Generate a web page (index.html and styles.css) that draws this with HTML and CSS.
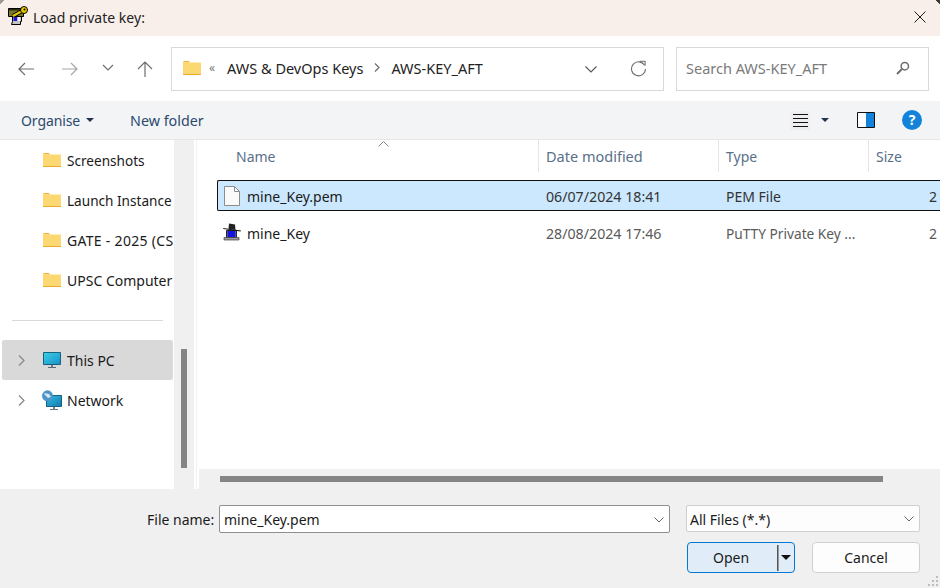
FILE: index.html
```html
<!DOCTYPE html>
<html lang="en">
<head>
<meta charset="utf-8">
<title>Load private key:</title>
<link rel="stylesheet" href="styles.css">
</head>
<body>
<svg class="defs" width="0" height="0" aria-hidden="true">
  <defs>
    <symbol id="folder" viewBox="0 0 18 14">
      <path d="M0 1.5C0 .7.6 0 1.4 0h4.4l1.6 1.5H0z" fill="#f2b233"/>
      <path d="M0 1.5h16.8c.7 0 1.2.5 1.2 1.2v10c0 .7-.5 1.3-1.2 1.3H1.2C.5 14 0 13.4 0 12.7z" fill="#fcd873"/>
      <path d="M0 13h18v.2c0 .5-.5.8-1.2.8H1.2C.5 14 0 13.7 0 13.2z" fill="#e9a825"/>
    </symbol>
  </defs>
</svg>
<div class="dialog">
  <header class="titlebar">
    <svg class="app-icon" width="20" height="20" viewBox="0 0 20 20">
      <path d="M.5 2.500h15v8H.5z" fill="#77772a" stroke="#000"/>
      <path d="M1 3h13v1.500H1z" fill="#2c2c10"/>
      <path d="M4.500 10.500h9v5h-1v3h-9l1-3z" fill="#c4c4c4" stroke="#000"/>
      <path d="M5.500 11h4v4h-4z" fill="#1a1ad8"/>
      <path d="M9.500 11h2.500v4H9.500z" fill="#f4f4f4"/>
      <path d="M5 10l9-5" stroke="#000" stroke-width="4.200"/>
      <path d="M5 10l9-5" stroke="#e8c800" stroke-width="2.200"/>
      <circle cx="16" cy="4" r="3.500" fill="#e8c800" stroke="#000"/>
      <circle cx="16.500" cy="3.500" r="1" fill="#000"/>
    </svg>
    <span class="title">Load private key:</span>
    <svg class="close" width="12" height="12" viewBox="0 0 12 12"><path d="M.5.5l11 11M11.5.5l-11 11" stroke="#1a1a1a" fill="none"/></svg>
  </header>

  <nav class="navbar">
    <svg class="nav-btn nav-back" width="16" height="14" viewBox="0 0 16 14"><path d="M16 7H1M7 1L1 7l6 6" stroke="#6e6e6e" stroke-width="1.2" fill="none"/></svg>
    <svg class="nav-btn nav-fwd" width="16" height="14" viewBox="0 0 16 14"><path d="M0 7h15M9 1l6 6-6 6" stroke="#a6a6a6" stroke-width="1.2" fill="none"/></svg>
    <svg class="nav-btn nav-drop" width="12" height="7" viewBox="0 0 12 7"><path d="M1 1l5 5 5-5" stroke="#6e6e6e" stroke-width="1.2" fill="none"/></svg>
    <svg class="nav-btn nav-up" width="16" height="16" viewBox="0 0 16 16"><path d="M8 16V1M1 8l7-7 7 7" stroke="#6e6e6e" stroke-width="1.2" fill="none"/></svg>
    <div class="address">
      <svg class="addr-folder" width="18" height="14"><use href="#folder"/></svg>
      <span class="crumb-more">«</span>
      <span class="crumb">AWS &amp; DevOps Keys</span>
      <svg class="crumb-sep" width="6" height="9" viewBox="0 0 6 9"><path d="M1 .5l4 4-4 4" stroke="#666" stroke-width="1.1" fill="none"/></svg>
      <span class="crumb">AWS-KEY_AFT</span>
      <svg class="addr-drop" width="12" height="7" viewBox="0 0 12 7"><path d="M.5.5L6 6 11.500.5" stroke="#555" stroke-width="1.1" fill="none"/></svg>
      <svg class="addr-refresh" width="17" height="17" viewBox="0 0 17 17"><path d="M14.5 5.2A7 7 0 1 0 15.5 9" stroke="#707070" stroke-width="1.1" fill="none"/><path d="M10.5 1h5.2v4.6" stroke="#707070" stroke-width="1.1" fill="none" transform="translate(-.6 .2)"/></svg>
    </div>
    <div class="search">
      <span class="search-text">Search AWS-KEY_AFT</span>
      <svg width="14" height="14" viewBox="0 0 14 14"><circle cx="8.8" cy="5.2" r="3.7" stroke="#6e6e6e" stroke-width="1.5" fill="none"/><path d="M6 8l-5 5" stroke="#6e6e6e" stroke-width="2"/></svg>
    </div>
  </nav>

  <div class="toolbar">
    <span class="tool organise">Organise</span>
    <span class="caret"></span>
    <span class="tool newfolder">New folder</span>
    <span class="view-btn">
      <svg width="15" height="13" viewBox="0 0 15 13"><path d="M0 .5h15M0 4.5h15M0 8.500h15M0 12.500h15" stroke="#111"/></svg>
    </span>
    <span class="caret view-caret"></span>
    <svg class="pane" width="18" height="16" viewBox="0 0 18 16"><path d="M.5.500h17v15H.5z" fill="#fff" stroke="#111"/><path d="M9 1h8v14H9z" fill="#1283d8"/></svg>
    <span class="help">?</span>
  </div>

  <main class="panes">
    <aside class="sidebar">
      <div class="side-row"><svg class="side-folder" width="18" height="14"><use href="#folder"/></svg><span class="side-text side-narrow">Screenshots</span></div>
      <div class="side-row"><svg class="side-folder" width="18" height="14"><use href="#folder"/></svg><span class="side-text side-narrow">Launch Instance</span></div>
      <div class="side-row"><svg class="side-folder" width="18" height="14"><use href="#folder"/></svg><span class="side-text side-wide">GATE - 2025 (CS</span></div>
      <div class="side-row"><svg class="side-folder" width="18" height="14"><use href="#folder"/></svg><span class="side-text">UPSC Computer</span></div>
      <div class="side-divider"></div>
      <div class="side-row side-row-active">
        <svg class="chev" width="7" height="11" viewBox="0 0 7 11"><path d="M1 .5l5 5-5 5" stroke="#8a8a8a" stroke-width="1.300" fill="none"/></svg>
        <svg class="side-icon" width="18" height="16" viewBox="0 0 18 16"><defs><linearGradient id="scr" x1="0" y1="0" x2="1" y2="1"><stop offset="0" stop-color="#3cd0e6"/><stop offset="1" stop-color="#1790c8"/></linearGradient></defs><path d="M.5.500h17v12H.5z" fill="url(#scr)" stroke="#17617f"/><path d="M8 13h2v2H8z" fill="#6f7f8a"/><path d="M5 15h8v1H5z" fill="#5b6872"/></svg>
        <span class="side-text">This PC</span>
      </div>
      <div class="side-row">
        <svg class="chev" width="7" height="11" viewBox="0 0 7 11"><path d="M1 .5l5 5-5 5" stroke="#8a8a8a" stroke-width="1.300" fill="none"/></svg>
        <svg class="side-icon net-icon" width="20" height="20" viewBox="0 0 20 20"><defs><linearGradient id="scr2" x1="0" y1="0" x2="1" y2="1"><stop offset="0" stop-color="#2fc0de"/><stop offset="1" stop-color="#1478b0"/></linearGradient></defs><path d="M4.500 5.500h15v11h-15z" fill="url(#scr2)" stroke="#175f80"/><path d="M11 17h2v2h-2z" fill="#6f7f8a"/><path d="M8 19h8v1H8z" fill="#6b7780"/><circle cx="5.500" cy="5.800" r="5.500" fill="#4d94c9"/><path d="M2 3l5 1 2 3-3 1-3-3z" fill="#d5e6f2"/></svg>
        <span class="side-text">Network</span>
      </div>
    </aside>
    <div class="side-scroll"><div class="side-thumb"></div></div>
    <section class="files">
      <div class="file-area">
        <div class="cols">
          <div class="col col-name">Name<svg class="sort" width="11" height="6" viewBox="0 0 11 6"><path d="M.5 5.500l5-5 5 5" stroke="#8a8a8a" fill="none"/></svg></div>
          <div class="col col-date">Date modified</div>
          <div class="col col-type">Type</div>
          <div class="col col-size">Size</div>
        </div>
        <div class="file-row file-row-selected">
          <div class="cell cell-name">
            <svg class="file-icon" width="16" height="20" viewBox="0 0 16 20"><path d="M.5.500h10l5 5v14H.5z" fill="#fafafa" stroke="#8c8c8c"/><path d="M10.500.500v5h5" fill="none" stroke="#8c8c8c"/></svg>
            <span>mine_Key.pem</span>
          </div>
          <div class="cell cell-date">06/07/2024 18:41</div>
          <div class="cell cell-type">PEM File</div>
          <div class="cell cell-size">2</div>
        </div>
        <div class="file-row">
          <div class="cell cell-name">
            <svg class="file-icon putty-icon" width="18" height="18" viewBox="0 0 18 18"><path d="M3.500 7.500h10v7h-10z" fill="#8a8a8a" stroke="#222"/><path d="M4.500 8h8v6h-8z" fill="#1414e0"/><path d="M1 14.500h15v2.500H1z" fill="#9a9a9a" stroke="#444" stroke-width=".7"/><path d="M0 5l18 2.500-.5 1L.5 6z" fill="#111"/><path d="M6 .5l6 1 .5 5.500L5.500 6z" fill="#222"/></svg>
            <span>mine_Key</span>
          </div>
          <div class="cell cell-date">28/08/2024 17:46</div>
          <div class="cell cell-type cell-type-long">PuTTY Private Key ...</div>
          <div class="cell cell-size">2</div>
        </div>
      </div>
      <div class="h-scroll"><div class="h-thumb"></div></div>
    </section>
  </main>

  <footer class="footer">
    <div class="footer-grid">
      <label class="fname-label">File name:</label>
      <div class="field field-name"><span>mine_Key.pem</span><svg width="10" height="6" viewBox="0 0 10 6"><path d="M.5.500L5 5 9.500.5" stroke="#666" fill="none"/></svg></div>
      <div class="field field-type"><span>All Files (*.*)</span><svg width="10" height="6" viewBox="0 0 10 6"><path d="M.5.500L5 5 9.500.5" stroke="#666" fill="none"/></svg></div>
      <div class="buttons">
        <div class="btn btn-open"><span class="open-label">Open</span><span class="open-sep"></span><span class="open-caret"></span></div>
        <div class="btn btn-cancel">Cancel</div>
      </div>
    </div>
    <svg class="grip" width="13" height="12" viewBox="0 0 13 12"><path d="M10 0h2v2h-2zM6 4h2v2H6zM10 4h2v2h-2zM2 8h2v2H2zM6 8h2v2H6zM10 8h2v2h-2z" fill="#bdbdbd"/></svg>
  </footer>
</div>
</body>
</html>
```

FILE: styles.css
```css
* { box-sizing: border-box; }
html, body { margin: 0; padding: 0; }
body {
  width: 940px;
  height: 588px;
  overflow: hidden;
  font-family: "Noto Sans", "Open Sans", sans-serif;
  font-size: 14px;
  color: #1a1a1a;
  background: #fff;
}
.defs { display: block; height: 0; }
.dialog { display: flex; flex-direction: column; width: 940px; height: 588px; }

/* Title bar */
.titlebar {
  height: 36px;
  flex: none;
  background: #f8efeb;
  display: flex;
  align-items: center;
  padding: 0 14px 1px 8px;
  position: relative;
}
.titlebar::before,
.titlebar::after {
  content: "";
  position: absolute;
  top: 0;
  width: 5px;
  height: 5px;
}
.titlebar::before { left: 0; background: linear-gradient(135deg, #9a9a9a 40%, transparent 45%); }
.titlebar::after { right: 0; background: linear-gradient(225deg, #3a3a3a 40%, transparent 45%); }
.app-icon { flex: none; margin-right: 5px; margin-top: -3px; }
.title { flex: 1; color: #222; letter-spacing: .03px; }
.close { flex: none; margin-bottom: 2px; }

/* Navigation */
.navbar {
  height: 65px;
  flex: none;
  display: flex;
  align-items: center;
  padding: 0 11px 0 18px;
  background: #fff;
}
.nav-btn { flex: none; }
.nav-fwd { margin-left: 28px; }
.nav-drop { margin-left: 24px; margin-bottom: 2px; }
.nav-up { margin-left: 23px; }
.address {
  margin-left: 18px;
  width: 493px;
  height: 44px;
  border: 1px solid #d9d9d9;
  display: flex;
  align-items: center;
  padding: 0 16px 2px 11px;
  color: #222;
  font-size: 14.5px;
}
.crumb-more { color: #777; font-size: 12px; margin: 0 12px 0 8px; }
.crumb-sep { margin: 0 11px 0 11px; flex: none; }
.addr-drop { margin-left: auto; margin-top: 4px; }
.addr-refresh { margin-left: 33px; margin-top: 2px; }
.search {
  margin-left: 12px;
  width: 253px;
  height: 44px;
  border: 1px solid #d9d9d9;
  display: flex;
  align-items: center;
  justify-content: space-between;
  padding: 0 18px 1px 9px;
}
.search-text { color: #7a7a7a; font-size: 14.5px; }

/* Toolbar */
.toolbar {
  height: 39px;
  flex: none;
  display: flex;
  align-items: center;
  background: #f3f4f6;
  border-bottom: 1px solid #e6e6e6;
  padding: 0 18px 0 21px;
  color: #2b4a6e;
}
.organise { letter-spacing: -.1px; }
.newfolder { margin-left: 36px; font-size: 14.3px; }
.caret {
  width: 0; height: 0;
  border-left: 4px solid transparent;
  border-right: 4px solid transparent;
  border-top: 4px solid #22324f;
  margin-left: 6px;
}
.view-btn {
  margin-left: auto;
  width: 20px; height: 19px;
  background: #eeeef0;
  display: flex; align-items: center; justify-content: center;
}
.view-caret { margin-left: 11px; }
.pane { margin-left: 28px; }
.help {
  margin-left: 27px;
  width: 20px; height: 20px;
  border-radius: 50%;
  background: #1283d8;
  color: #fff;
  font-size: 14px;
  font-weight: 700;
  line-height: 20px;
  text-align: center;
}

/* Panes */
.panes { flex: 1; min-height: 0; display: flex; }
.sidebar { width: 174px; flex: none; overflow: hidden; background: #fff; padding-left: 2px; }
.side-row {
  width: 171px;
  height: 40px;
  display: flex;
  align-items: center;
  padding-left: 41px;
  white-space: nowrap;
  color: #1a1a1a;
}
.side-folder { flex: none; margin-right: 6px; }
.side-text { flex: none; }
.side-narrow { font-size: 13.6px; }
.side-wide { letter-spacing: .3px; }
.side-divider { width: 151px; height: 1px; background: #d9d9d9; margin: 20px 0 19px 10px; }
.side-row-active { background: #d9d9d9; border-radius: 2px; }
.side-row .chev { flex: none; margin-left: -25px; margin-right: 18px; }
.side-icon { flex: none; margin-right: 6px; }
.net-icon { margin-left: -1px; margin-right: 5px; }
.side-scroll {
  width: 20px;
  flex: none;
  background: #f0f0f0;
  padding: 209px 7px 0;
}
.side-thumb { width: 6px; height: 119px; background: #858585; }

.files { flex: 1; min-width: 0; display: flex; flex-direction: column; padding-left: 5px; background: linear-gradient(90deg, #fff 2px, #f0f0f0 2px, #f0f0f0 3px, #fff 3px); }
.file-area { flex: 1; min-height: 0; overflow: hidden; background: #fff; }
.cols { display: flex; height: 32px; color: #5a6f88; }
.col { height: 32px; line-height: 33px; padding-left: 7px; border-right: 1px solid #e5e5e5; flex: none; }
.col-name { width: 340px; padding-left: 37px; position: relative; }
.sort { position: absolute; left: 179px; top: 1px; }
.col-date { width: 180px; font-size: 14.5px; }
.col-type { width: 150px; }
.col-size { width: 80px; border-right: 0; }
.file-row {
  display: flex;
  align-items: center;
  height: 37px;
  margin-left: 18px;
  white-space: nowrap;
  color: #5a5a5a;
}
.file-row-selected {
  height: 31px;
  margin-top: 8px;
  margin-bottom: 4px;
  background: #cce8ff;
  border: 1px solid #111;
  border-right: 0;
  border-radius: 2px 0 0 2px;
  color: #333;
}
.cell { flex: none; }
.cell-name { display: flex; align-items: center; color: #1a1a1a; padding-left: 6px; width: 329px; }
.file-icon { flex: none; margin-right: 6px; }
.putty-icon { margin-top: -3px; }
.file-row-selected .cell { padding-top: 1px; }
.file-row-selected .cell-name { width: 328px; padding-top: 0; }
.file-row-selected .cell-name span { padding-top: 1px; }
.file-row-selected .file-icon { margin-right: 7px; }
.cell-date { width: 180px; font-size: 14.2px; }
.cell-type { width: 203px; }
.cell-type-long { font-size: 13.7px; }
.cell-size { width: 20px; }

.h-scroll { height: 20px; flex: none; background: #f0f0f0; padding: 7px 0 0 21px; }
.h-thumb { width: 663px; height: 6px; background: #858585; }

/* Footer */
.footer {
  height: 99px;
  flex: none;
  background: #f0f0f0;
  display: flex;
  position: relative;
  padding: 16px 0 0 147px;
}
.footer-grid {
  display: grid;
  grid-template-columns: 72px 451px 250px;
  grid-template-rows: 28px 32px;
  row-gap: 9px;
}
.fname-label { line-height: 30px; color: #1a1a1a; }
.field {
  display: flex;
  align-items: center;
  justify-content: space-between;
  background: #fff;
  border: 1px solid #8f8f8f;
  border-radius: 2px;
  padding: 1px 5px 0 4px;
}
.field-type { margin-left: 16px; background: #fdfdfd; border-color: #cfcfcf; height: 27px; padding-left: 3px; }
.buttons {
  grid-column: 3;
  grid-row: 2;
  margin-left: 17px;
  display: flex;
  gap: 17px;
}
.btn {
  width: 108px;
  height: 31px;
  border-radius: 4px;
  display: flex;
  align-items: center;
  justify-content: center;
  color: #1a1a1a;
}
.btn-open { background: #e0edf8; border: 1px solid #0078d4; justify-content: flex-start; padding-left: 25px; }
.open-label { width: 64px; flex: none; }
.open-sep { width: 1px; height: 26px; background: #555; box-shadow: 1px 0 0 #999; flex: none; }
.open-caret {
  width: 0; height: 0;
  margin-left: 3px;
  border-left: 5px solid transparent;
  border-right: 5px solid transparent;
  border-top: 5px solid #111;
}
.btn-cancel { background: #fdfdfd; border: 1px solid #d0d0d0; }
.grip { position: absolute; right: 1px; bottom: 0; }
```
